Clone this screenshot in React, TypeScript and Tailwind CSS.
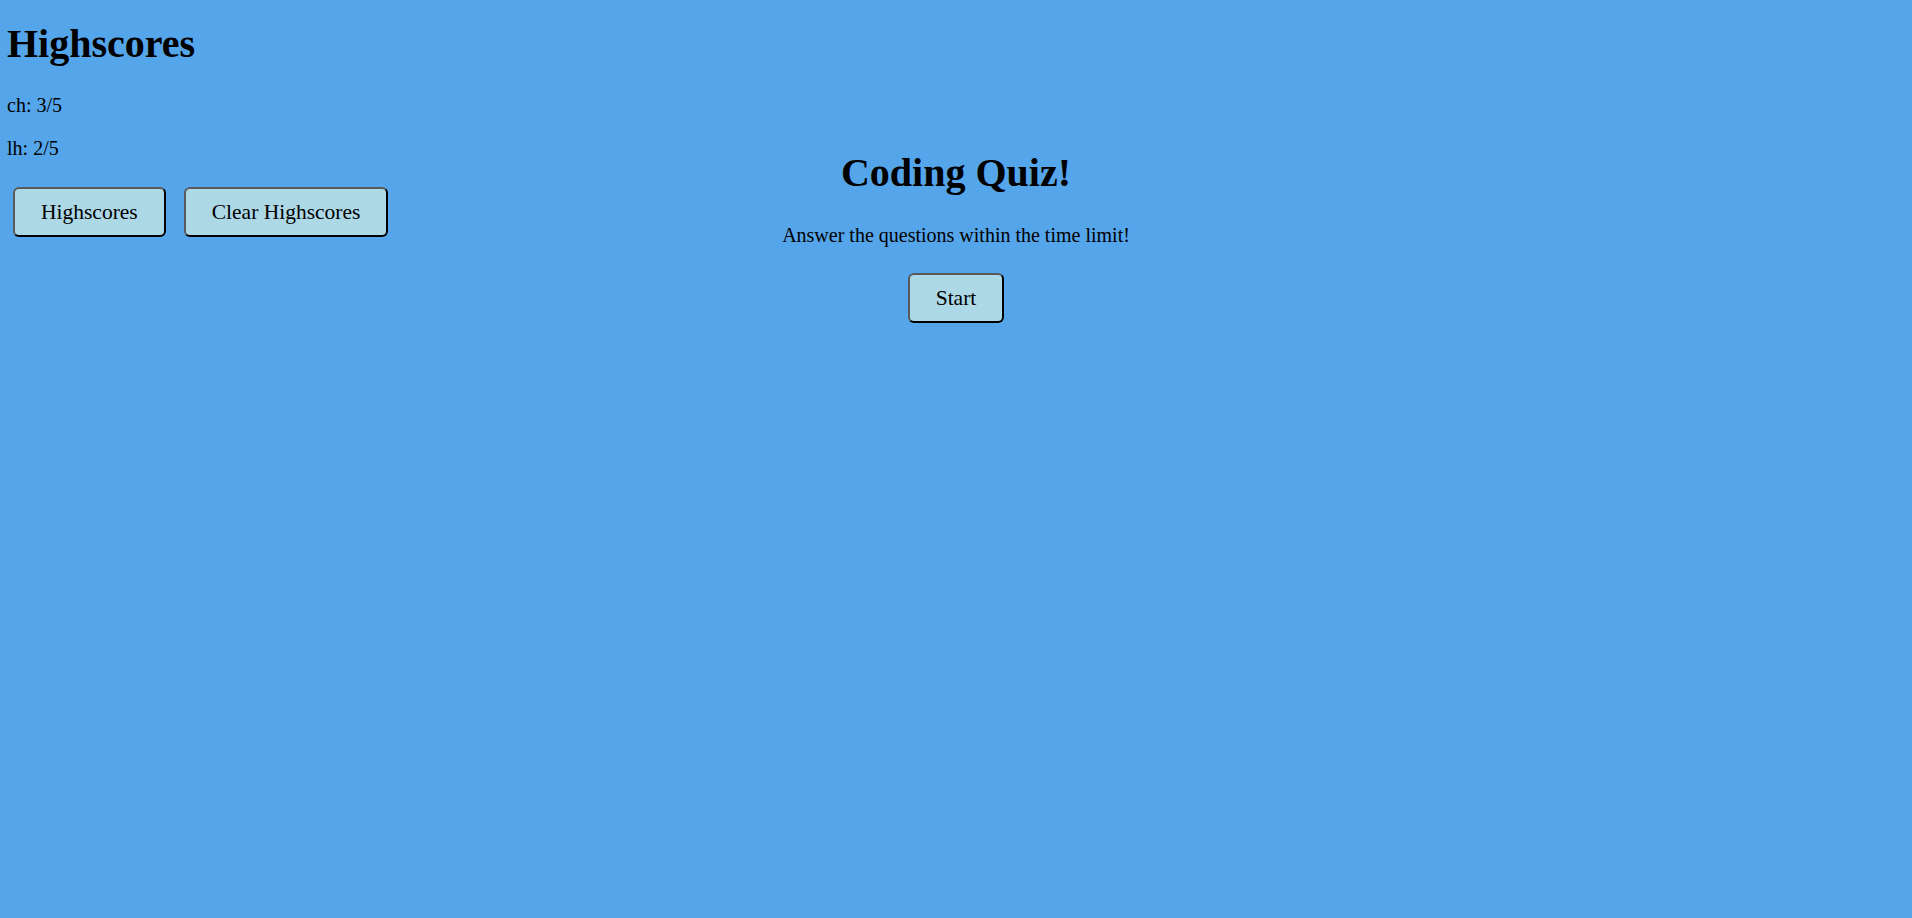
import React from 'react';

const btn =
  'bg-[#add8e6] text-black text-[21.5px] leading-[24px] px-[26px] py-[11px] border-2 border-t-[#5a5a5a] border-l-[#5a5a5a] border-b-black border-r-black rounded-[6px]';

const scores = [
  { name: 'ch', score: '3/5' },
  { name: 'lh', score: '2/5' },
];

const App: React.FC = () => {
  return (
    <div
      className="min-h-screen w-full bg-[#55a5ea] text-black grid grid-cols-[1fr_auto_1fr] items-start"
      style={{ fontFamily: '"Liberation Serif", "Times New Roman", serif' }}
    >
      <div className="pl-[7px]">
        <h1 className="text-[40px] leading-[46px] font-bold mt-[21px]">Highscores</h1>
        {scores.map((s, i) => (
          <p key={s.name} className={`text-[20px] leading-[23px] ${i === 0 ? 'mt-[27px]' : 'mt-[20px]'}`}>
            {s.name}: {s.score}
          </p>
        ))}
        <div className="flex gap-[18px] ml-[6px] mt-[27px]">
          <button className={btn}>Highscores</button>
          <button className={btn}>Clear Highscores</button>
        </div>
      </div>

      <div className="flex flex-col items-center text-center pt-[150px]">
        <h1 className="text-[40px] leading-[46px] font-bold">Coding Quiz!</h1>
        <p className="text-[20px] leading-[23px] mt-[28px]">Answer the questions within the time limit!</p>
        <button className={`${btn} mt-[26px]`}>Start</button>
      </div>

      <div />
    </div>
  );
};

export default App;
